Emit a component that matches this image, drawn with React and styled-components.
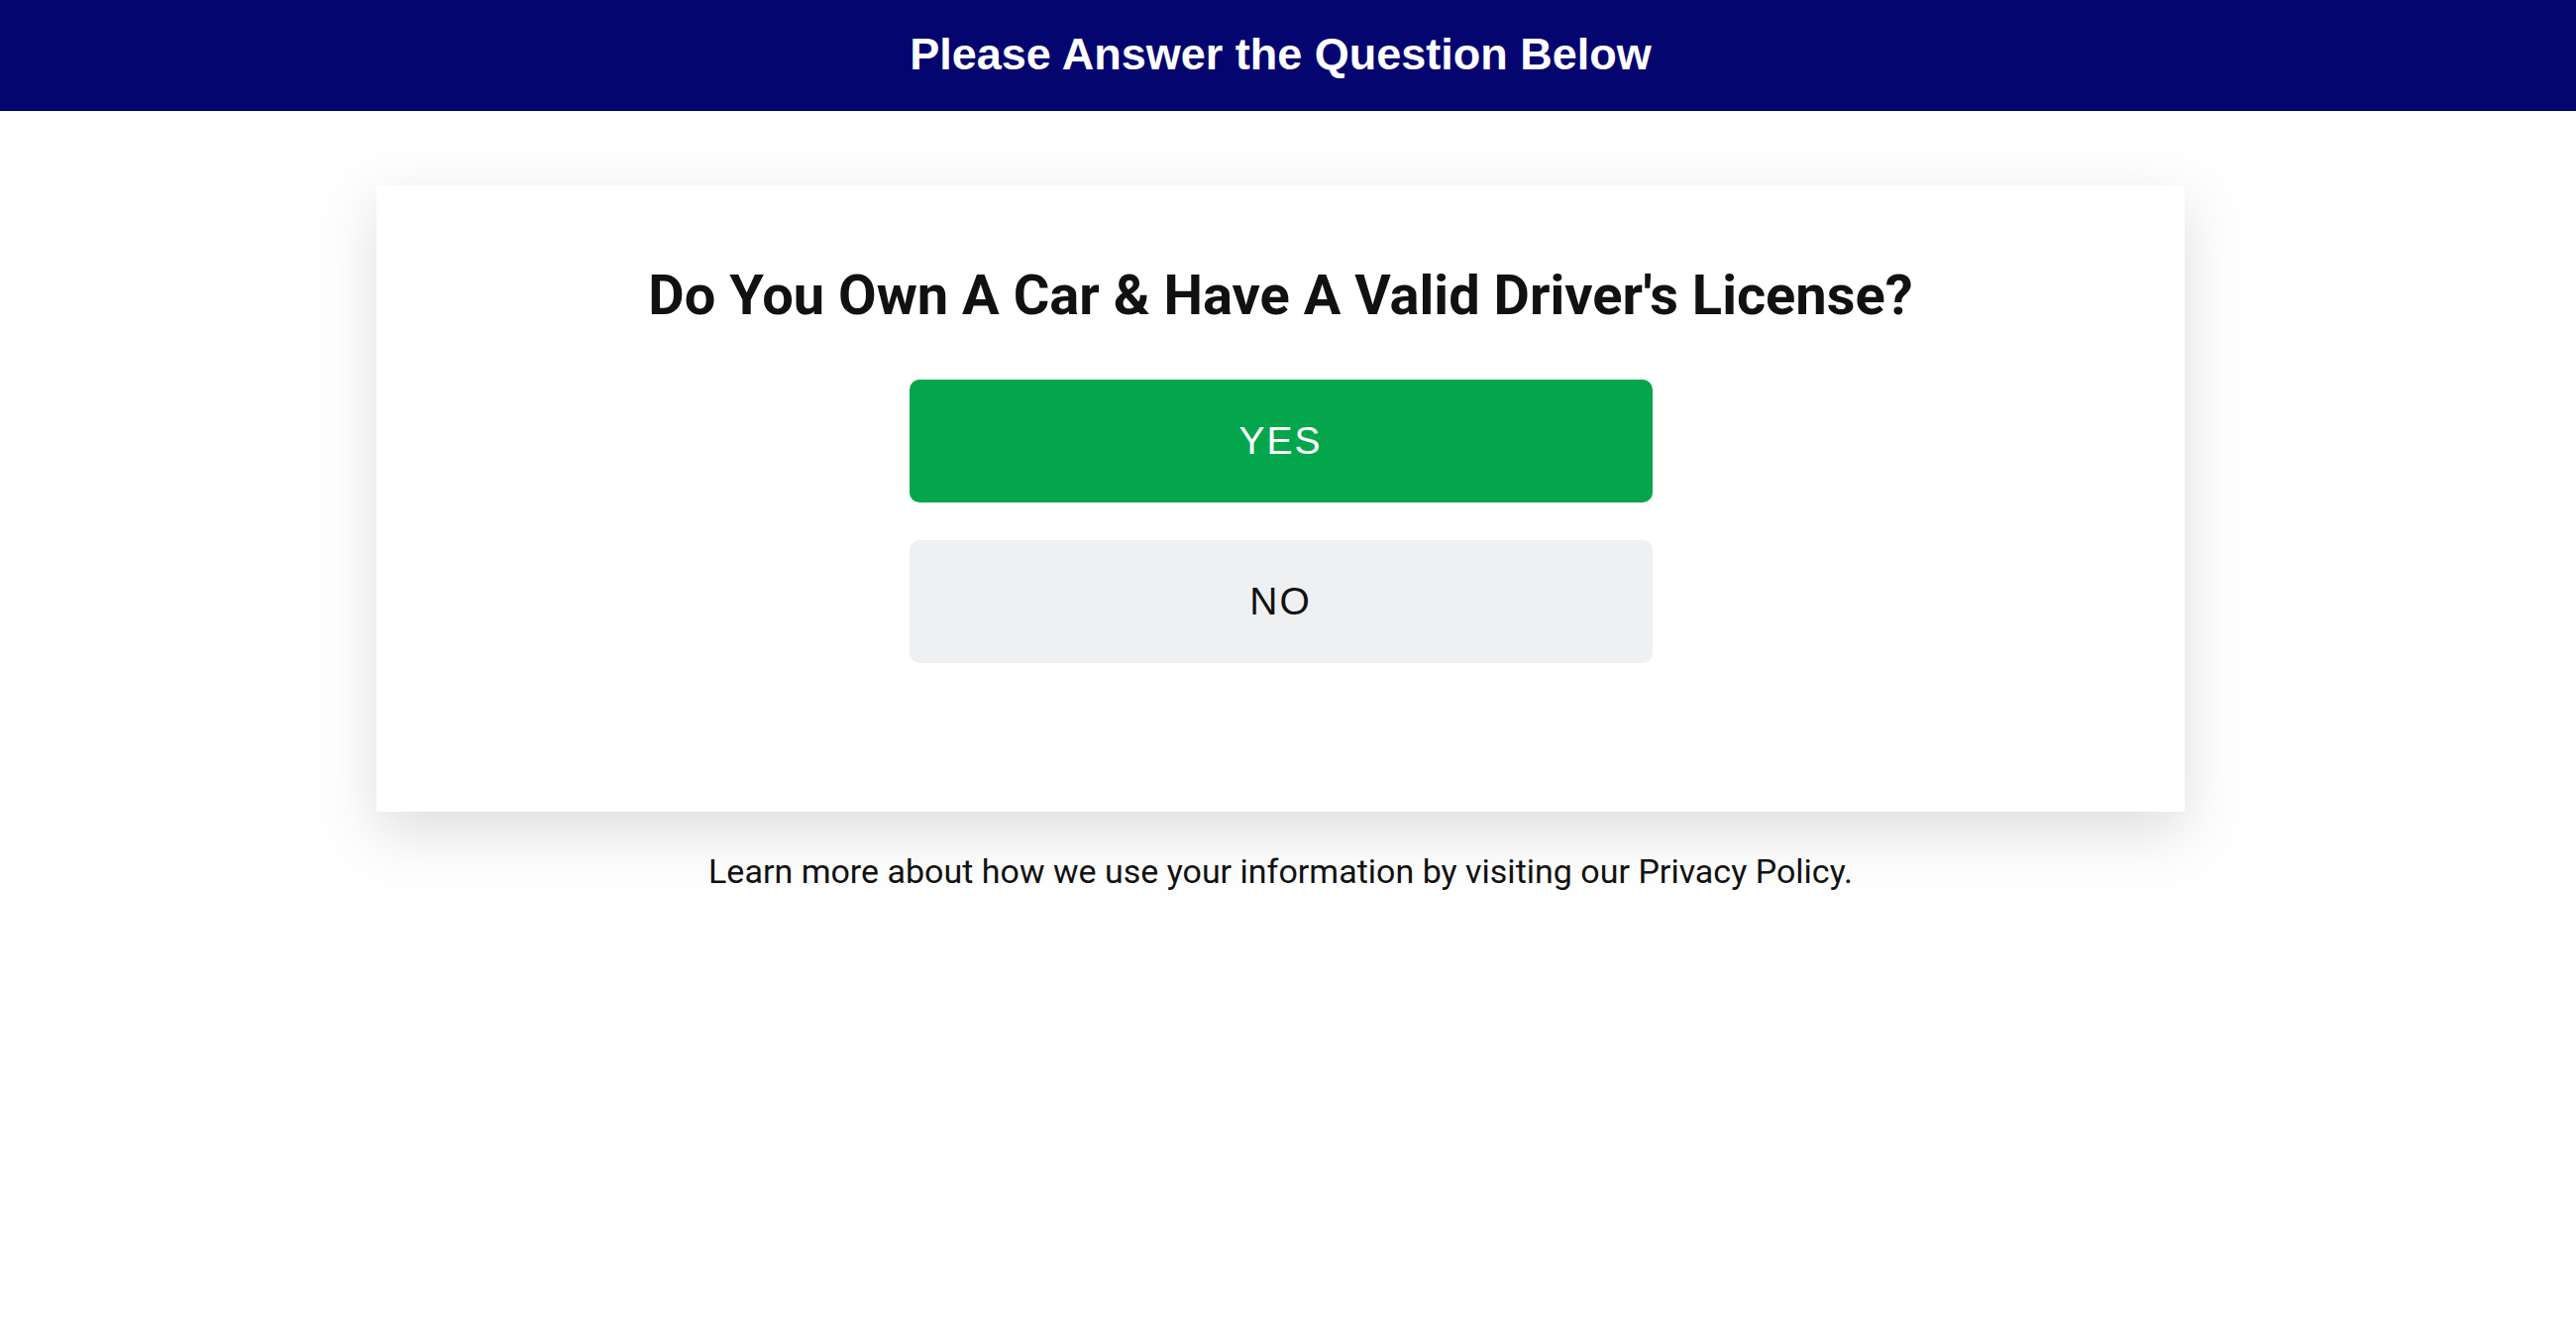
import React from "react"
import styled, { createGlobalStyle } from "styled-components"

const GlobalStyle = createGlobalStyle`
  html, body {
    margin: 0;
    padding: 0;
    background: #fefefe;
  }
  * { box-sizing: border-box; }
`

const Page = styled.div`
  min-height: 1344px;
  background: #fefefe;
  font-family: Roboto, "Liberation Sans", Arial, sans-serif;
`

const TopBar = styled.header`
  height: 112px;
  background: #050570;
  display: flex;
  align-items: center;
  justify-content: center;
  padding-right: 15px;
`

const TopTitle = styled.h1`
  margin: 0 0 2px;
  color: #fff;
  font-family: "Liberation Sans", Arial, sans-serif;
  font-weight: 700;
  font-size: 45px;
`

const Main = styled.main`
  display: flex;
  flex-direction: column;
  align-items: center;
  padding: 75px 15px 0 0;
`

const Card = styled.section`
  width: 1825px;
  height: 632px;
  background: #fff;
  box-shadow: 0 20px 55px rgba(0, 0, 0, 0.13);
  display: flex;
  flex-direction: column;
  align-items: center;
  padding-top: 78px;
`

const Question = styled.h2`
  margin: 0 0 51px;
  color: #111;
  font-size: 56px;
  font-weight: 700;
  line-height: 1.2;
`

const Choices = styled.div`
  display: flex;
  flex-direction: column;
  gap: 38px;
  width: 750px;
`

const Choice = styled.button`
  height: 124px;
  border: none;
  border-radius: 10px;
  background: ${p => (p.$primary ? "#04a64c" : "#eff0f2")};
  color: ${p => (p.$primary ? "#fff" : "#111")};
  font-family: "Liberation Sans", Arial, sans-serif;
  font-size: 39px;
  letter-spacing: 2px;
  cursor: pointer;
`

const Note = styled.p`
  margin: 40px 0 0;
  color: #111;
  font-size: 34px;
`

export default function App() {
  return (
    <Page>
      <GlobalStyle />
      <TopBar>
        <TopTitle>Please Answer the Question Below</TopTitle>
      </TopBar>
      <Main>
        <Card>
          <Question>Do You Own A Car &amp; Have A Valid Driver's License?</Question>
          <Choices>
            <Choice $primary>YES</Choice>
            <Choice>NO</Choice>
          </Choices>
        </Card>
        <Note>Learn more about how we use your information by visiting our Privacy Policy.</Note>
      </Main>
    </Page>
  )
}
